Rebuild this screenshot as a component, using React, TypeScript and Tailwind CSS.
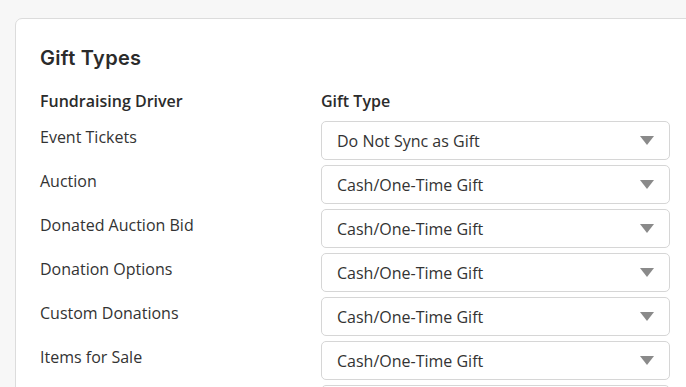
const rows = [
  { driver: "Event Tickets", gift: "Do Not Sync as Gift" },
  { driver: "Auction", gift: "Cash/One-Time Gift" },
  { driver: "Donated Auction Bid", gift: "Cash/One-Time Gift" },
  { driver: "Donation Options", gift: "Cash/One-Time Gift" },
  { driver: "Custom Donations", gift: "Cash/One-Time Gift" },
  { driver: "Items for Sale", gift: "Cash/One-Time Gift" },
];

function SelectBox({ value }: { value?: string }) {
  return (
    <div className="w-[349px] h-[39px] border border-[#d6d6d6] rounded-[5px] bg-white flex items-center justify-between px-[15px]">
      <span className="text-[16px] text-[#333]">{value}</span>
      <svg width="14" height="9" viewBox="0 0 14 9">
        <polygon points="0,0 14,0 7,9" fill="#8a8a8a" />
      </svg>
    </div>
  );
}

export default function App() {
  return (
    <div
      className="w-[686px] h-[387px] overflow-hidden bg-[#f7f7f7] pt-[18px] pl-[15px]"
      style={{ fontFamily: '"Open Sans", "Liberation Sans", sans-serif' }}
    >
      <div className="w-[720px] min-h-[500px] bg-white border border-[#dcdcdc] rounded-[7px] pl-[24px] pt-[25px]">
        <h2
          className="text-[20px] leading-[28px] font-semibold tracking-[0.3px] text-[#2b2b2b]"
          style={{ fontFamily: "Inter, sans-serif" }}
        >
          Gift Types
        </h2>
        <div className="flex mt-[18px] text-[16px] leading-[22px] font-semibold text-[#2b2b2b]">
          <div className="w-[281px]">Fundraising Driver</div>
          <div>Gift Type</div>
        </div>
        <div className="flex flex-col gap-[5px] mt-[9px]">
          {rows.map((row) => (
            <div key={row.driver} className="flex">
              <div className="w-[281px] pt-[5px] text-[16px] leading-[22px] text-[#333]">{row.driver}</div>
              <SelectBox value={row.gift} />
            </div>
          ))}
          <div className="flex">
            <div className="w-[281px]" />
            <SelectBox />
          </div>
        </div>
      </div>
    </div>
  );
}
